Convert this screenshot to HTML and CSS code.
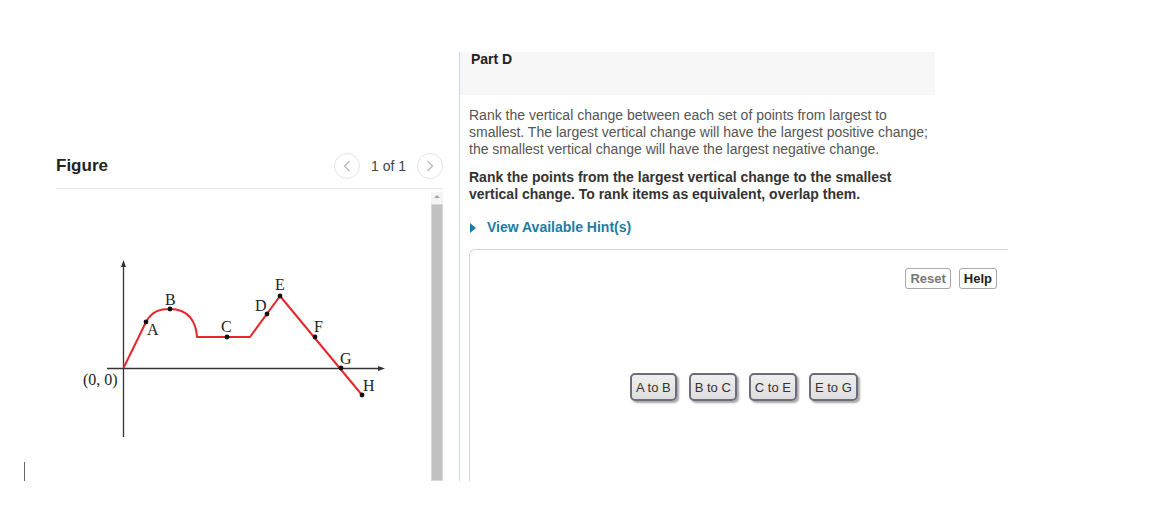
FILE: index.html
```html
<!DOCTYPE html>
<html lang="en">
<head>
<meta charset="utf-8">
<title>Part D</title>
<link rel="stylesheet" href="styles.css">
</head>
<body>
<div class="page">
  <div class="cursor"></div>
  <section class="figure-panel">
    <div class="fig-head">
      <h2 class="fig-title">Figure</h2>
      <div class="pager">
        <button class="nav" aria-label="Previous">
          <svg width="8" height="12" viewBox="0 0 8 12"><path d="M6.5 1 L1.5 6 L6.5 11" fill="none" stroke="#b8b8b8" stroke-width="1.3"/></svg>
        </button>
        <span class="count">1 of 1</span>
        <button class="nav" aria-label="Next">
          <svg width="8" height="12" viewBox="0 0 8 12"><path d="M1.5 1 L6.5 6 L1.5 11" fill="none" stroke="#b8b8b8" stroke-width="1.3"/></svg>
        </button>
      </div>
    </div>
    <div class="fig-body">
      <svg class="graph" width="375" height="291" viewBox="56 190 375 291">
        <g stroke="#333" stroke-width="1.3" fill="none">
          <line x1="123.5" y1="266" x2="123.5" y2="438"/>
          <line x1="107" y1="369.5" x2="380" y2="369.5"/>
        </g>
        <polygon points="123.5,261 121,268 126,268" fill="#333"/>
        <polygon points="385,369.5 378,367 378,372" fill="#333"/>
        <path d="M123.5,369 L146,323 C152,312 160,310 170,310 C188,310 196,322 197,338 L250,338 L280,297 L362,396" fill="none" stroke="#e8262b" stroke-width="2" stroke-linejoin="round"/>
        <g fill="#111">
          <circle cx="146" cy="323" r="2.4"/>
          <circle cx="170" cy="310" r="2.4"/>
          <circle cx="227" cy="338" r="2.4"/>
          <circle cx="267" cy="315" r="2.4"/>
          <circle cx="280" cy="297" r="2.4"/>
          <circle cx="315" cy="338" r="2.4"/>
          <circle cx="341" cy="369" r="2.4"/>
          <circle cx="362" cy="396" r="2.4"/>
        </g>
        <g class="lbl">
          <text x="147" y="336">A</text>
          <text x="165" y="306">B</text>
          <text x="221" y="333">C</text>
          <text x="255" y="312">D</text>
          <text x="275" y="291">E</text>
          <text x="314" y="333">F</text>
          <text x="340" y="365">G</text>
          <text x="363" y="392">H</text>
          <text x="83" y="386">(0, 0)</text>
        </g>
      </svg>
      <div class="scrollbar">
        <div class="scroll-arrow"></div>
        <div class="scroll-thumb"></div>
      </div>
    </div>
  </section>
  <section class="part">
    <div class="part-head">Part D</div>
    <div class="part-body">
      <p class="desc">Rank the vertical change between each set of points from largest to smallest. The largest vertical change will have the largest positive change; the smallest vertical change will have the largest negative change.</p>
      <p class="instr">Rank the points from the largest vertical change to the smallest vertical change. To rank items as equivalent, overlap them.</p>
      <div class="hint"><span class="tri"></span>View Available Hint(s)</div>
      <div class="rank-box">
        <div class="tools">
          <button class="tool reset">Reset</button>
          <button class="tool help">Help</button>
        </div>
        <div class="items">
          <div class="item">A to B</div>
          <div class="item">B to C</div>
          <div class="item">C to E</div>
          <div class="item">E to G</div>
        </div>
      </div>
    </div>
  </section>
</div>
</body>
</html>
```

FILE: styles.css
```css
* { box-sizing: border-box; }
html, body { margin: 0; padding: 0; background: #fff; }
body {
  font-family: "Liberation Sans", Arial, sans-serif;
  color: #333;
}
.page {
  display: flex;
  margin-top: 52px;
  height: 429px;
  overflow: hidden;
}
.cursor {
  width: 1px;
  height: 19px;
  background: #666;
  align-self: flex-end;
  margin-left: 24px;
  flex: none;
}
.figure-panel {
  width: 387px;
  margin-left: 31px;
  padding-top: 102px;
  flex: none;
  display: flex;
  flex-direction: column;
}
.fig-head {
  display: flex;
  justify-content: space-between;
  align-items: center;
  height: 35px;
  padding-bottom: 10px;
  border-bottom: 1px solid #e6e6e6;
}
.fig-title {
  margin: 0;
  font-size: 17px;
  line-height: 24px;
  font-weight: bold;
  color: #222;
}
.pager {
  display: flex;
  align-items: center;
  gap: 11px;
}
.nav {
  width: 26px;
  height: 26px;
  border-radius: 50%;
  border: 1px solid #e4e4e4;
  background: #fff;
  padding: 0;
  display: flex;
  align-items: center;
  justify-content: center;
}
.count {
  font-size: 14px;
  color: #444;
  line-height: 16px;
}
.fig-body {
  display: flex;
  flex: 1;
}
.graph {
  display: block;
  flex: none;
}
.lbl text {
  font-family: "Liberation Serif", "Times New Roman", serif;
  font-size: 16px;
  fill: #222;
}
.scrollbar {
  width: 12px;
  margin-top: 3px;
  background: #f4f4f4;
  display: flex;
  flex-direction: column;
  align-items: center;
  flex: none;
}
.scroll-arrow {
  width: 0;
  height: 0;
  margin-top: 3px;
  border-left: 3px solid transparent;
  border-right: 3px solid transparent;
  border-bottom: 3px solid #a3a3a3;
}
.scroll-thumb {
  margin-top: 6px;
  width: 12px;
  flex: 1;
  background: #c1c1c1;
  border: 1px solid #d8d8d8;
}
.part {
  margin-left: 16px;
  border-left: 1px solid #c9d7e8;
  width: 580px;
  flex: none;
}
.part-head {
  width: 475px;
  height: 43px;
  background: #f7f7f7;
  padding-left: 11px;
  font-size: 14px;
  font-weight: bold;
  line-height: 15px;
  color: #222;
}
.part-body {
  padding-left: 9px;
}
.desc {
  margin: 12px 0 0;
  width: 468px;
  font-size: 14px;
  line-height: 17px;
  color: #555;
}
.instr {
  margin: 11px 0 0;
  width: 468px;
  font-size: 14px;
  line-height: 17px;
  font-weight: bold;
  color: #333;
}
.hint {
  margin-top: 16px;
  display: flex;
  align-items: center;
  font-size: 14px;
  line-height: 17px;
  font-weight: bold;
  color: #1d7ca6;
}
.tri {
  width: 0;
  height: 0;
  border-top: 5px solid transparent;
  border-bottom: 5px solid transparent;
  border-left: 6px solid #1d7ca6;
  margin: 0 11px 0 1px;
}
.rank-box {
  margin-top: 13px;
  width: 539px;
  height: 300px;
  border-top: 1px solid #d6d6d6;
  border-left: 1px solid #d6d6d6;
  border-top-left-radius: 6px;
}
.tools {
  display: flex;
  justify-content: flex-end;
  gap: 8px;
  padding: 18px 11px 0 0;
}
.tool {
  height: 21px;
  padding: 0 4px;
  font-family: "Liberation Sans", Arial, sans-serif;
  font-size: 13px;
  font-weight: bold;
  background: #fff;
  border: 1px solid #a8a8a8;
  border-radius: 3px;
}
.reset { color: #777; }
.help { color: #222; }
.items {
  display: flex;
  gap: 12px;
  margin-top: 84px;
  padding-left: 160px;
}
.item {
  height: 28px;
  padding: 0 4px;
  display: flex;
  align-items: center;
  font-size: 13px;
  color: #333;
  background: linear-gradient(#eeeeee, #dedede);
  border: 2px solid #6c6c7c;
  border-radius: 5px;
  box-shadow: 2px 2px 2px rgba(0,0,0,0.35);
}
```
